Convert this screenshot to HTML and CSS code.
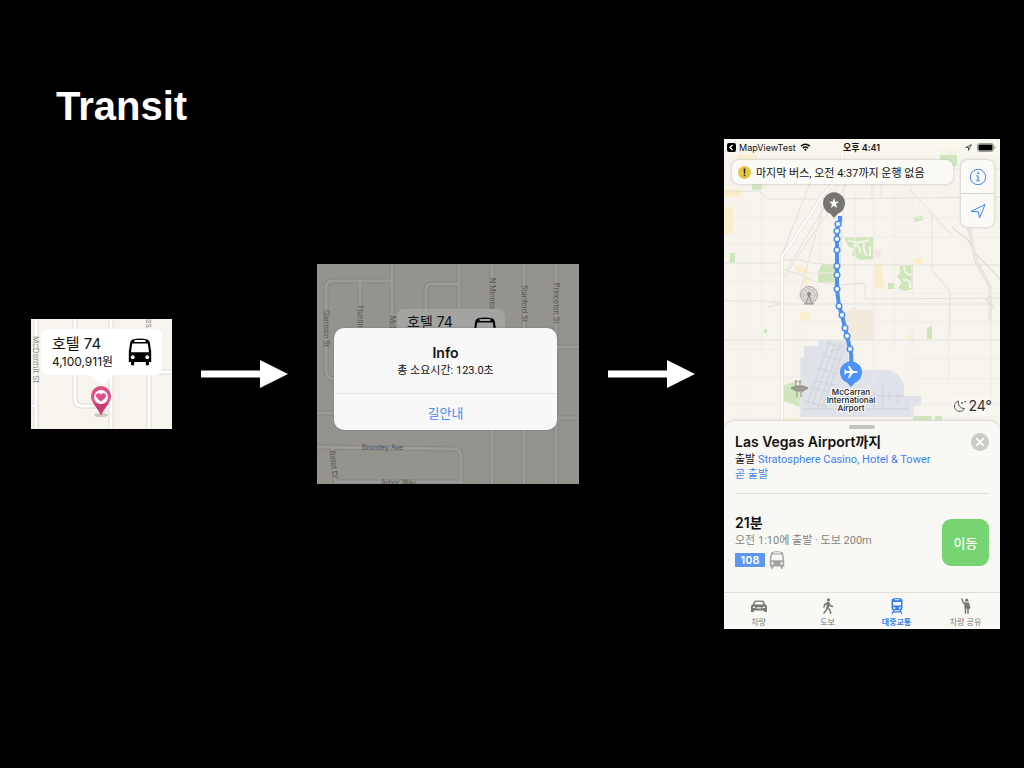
FILE: index.html
```html
<!DOCTYPE html>
<html lang="ko">
<head>
<meta charset="utf-8">
<meta name="viewport" content="width=device-width, initial-scale=1">
<title>Transit</title>
<link rel="stylesheet" href="styles.css">
</head>
<body>
<svg class="defs" aria-hidden="true">
  <symbol id="bus" viewBox="0 0 24 28">
    <path fill-rule="evenodd" d="M4.500 1.400Q12-.6 19.500 1.400 21.500 2.100 21.800 4.500L23.200 13.500V24H21V26.300Q20.800 27.600 19.500 27.600 18 27.600 17.800 26.300V24H6.200V26.300Q6 27.600 4.500 27.600 3.200 27.600 3 26.300V24H.8V13.500L2.200 4.500Q2.500 2.100 4.500 1.400zM7.300 1.900Q6.300 1.900 6.300 2.900T7.300 3.900H16.700Q17.700 3.900 17.700 2.900T16.700 1.900zM4.200 5.400 3 14.200H21L19.800 5.400zM4.700 17.300a1.900 1.900 0 1 0 .1 0zM19.200 17.300a1.900 1.900 0 1 0 .1 0z"/>
  </symbol>
</svg>

<header class="slide-header"><h1>Transit</h1></header>

<main class="flow">
  <section class="shot shot-pin" aria-label="호텔 74">
    <svg class="map" viewBox="0 0 141 110" preserveAspectRatio="xMidYMid slice" aria-hidden="true">
      <path class="road-edge" d="M5 0V110M80 0V110M118 0V110M118 53H141M0 87H5M44 0V81Q45 87 51 87H80"/>
      <path class="road-fill" d="M5 0V110M80 0V110M118 0V110M118 53H141M0 87H5M44 0V81Q45 87 51 87H80"/>
      <text class="street" transform="translate(2 17) rotate(90)">McDermit St</text>
      <text class="street" transform="translate(115 0) rotate(90)">es</text>
      <ellipse cx="70" cy="96" rx="7" ry="2" fill="#cfc9c4"/>
      <path d="M70 96C67 89 60 84 60 77a10 10 0 0 1 20 0c0 7-7 12-10 19z" fill="#dc4f88"/>
      <path d="M70 96c-2-4-5-8-7.500-11.500h15C75 88 72 92 70 96z" fill="#c93d74"/>
      <circle cx="70" cy="78" r="7" fill="#fff"/>
      <path d="M70 82.500c-2-1.800-5-3.500-5-5.800 0-2.600 3.500-3.300 5-.9 1.500-2.400 5-1.700 5 .9 0 2.300-3 4-5 5.800z" fill="#dc4f88"/>
    </svg>
    <div class="callout">
      <div class="callout-text">
        <strong>호텔 74</strong>
        <span>4,100,911원</span>
      </div>
      <svg class="callout-bus"><use href="#bus"/></svg>
    </div>
  </section>

  <svg class="arrow" viewBox="0 0 87 28" aria-hidden="true"><path d="M0 10.500H59V0L87 14 59 28V17.500H0z" fill="#fff"/></svg>

  <section class="shot shot-alert">
    <svg class="map" viewBox="0 0 262 220" preserveAspectRatio="xMidYMid slice" aria-hidden="true">
      <path class="dim-edge" d="M75 0V66M75 17H15Q9 17 9 24V107Q10 115 18 115M43 17V66M142 0V60M142 20H114Q109 20 109 26V60M175 0V220M207 0V220M239 0V220M239 83H262M0 149H20M239 154H262M0 183 138 185Q144 186 144 193V220M15 184Q16 200 19 220M19 218H146"/>
      <path class="dim-fill" d="M75 0V66M75 17H15Q9 17 9 24V107Q10 115 18 115M43 17V66M142 0V60M142 20H114Q109 20 109 26V60M175 0V220M207 0V220M239 0V220M239 83H262M0 149H20M239 154H262M0 183 138 185Q144 186 144 193V220M15 184Q16 200 19 220M19 218H146"/>
      <g class="dim-street">
        <text transform="translate(7 46) rotate(90)">Garrison St</text>
        <text transform="translate(41 42) rotate(90)">Huntington</text>
        <text transform="translate(73 52) rotate(90)">McDermit</text>
        <text transform="translate(173 14) rotate(90)">N Minnesota</text>
        <text transform="translate(205 21) rotate(90)">Stanford St</text>
        <text transform="translate(237 19) rotate(90)">Princeton St</text>
        <text x="45" y="186">Bromley Ave</text>
        <text x="64" y="221">Arbor Way</text>
        <text transform="translate(13 187) rotate(84)">Ballet Dr</text>
      </g>
    </svg>
    <div class="callout callout-dim" aria-hidden="true">
      <div class="callout-text"><strong>호텔 74</strong></div>
      <svg class="callout-bus"><use href="#bus"/></svg>
    </div>
    <div class="dialog" role="dialog" aria-labelledby="dlg-title">
      <div class="dialog-body">
        <h2 id="dlg-title">Info</h2>
        <p>총 소요시간: 123.0초</p>
      </div>
      <button type="button">길안내</button>
    </div>
  </section>

  <svg class="arrow" viewBox="0 0 87 28" aria-hidden="true"><path d="M0 10.500H59V0L87 14 59 28V17.500H0z" fill="#fff"/></svg>

  <section class="phone">
    <div class="phone-map">
      <svg class="map" viewBox="0 0 276 292" preserveAspectRatio="xMidYMin slice" aria-hidden="true">
        <rect width="276" height="292" fill="#f7f4ee"/>
        <g fill="#f9efcf">
          <path d="M0 68H9V95H0zM0 50H17V58H0zM13 9H33V20H13zM150 125H158L160 150H150zM190 119H199V125H190zM76 173H86V181H76zM70 127 83 128 86 136 72 133zM82 137 87 139 84 147 77 147zM183 196H189V201H183zM60 279H75V284H60zM35 43H42V50H35z"/>
        </g>
        <path d="M123 173 130 167 135 171 150 171V201H123z" fill="#f3eade"/>
        <path d="M150 111H157V119H150z" fill="#f8e6e4"/>
        <path d="M94 201H122L126 231H165Q176 235 180 245V257H190V278H76V219H80V207H94zM190 257H197V267H190z" fill="#dfe2e8"/>
        <g fill="#cfe6bd">
          <path d="M98 125H113V144L94 143V133zM6 114H11V124H6zM203 189 208 187V200H203zM60 246 70 243 76 248V268L60 262zM189 277H208V283H189zM211 277H218V283H211zM216 10H233V27H216zM189 78 199 77V81L191 83zM164 144H171V150H164zM28 45H38V51H28zM40 190H43V194H40z"/>
          <path d="M120 98H149V120L136 121 128 116 130 110 124 107zM176 126H189V150L180 152 174 149 178 143 173 138 176 134z"/>
        </g>
        <path d="M124 101Q132 106 145 101M129 107Q136 104 136 114M140 104Q139 112 143 117M146 107V117M180 127Q181 138 189 135M179 141Q187 139 186 149" fill="none" stroke="#f4f5e9" stroke-width="2"/>
        <g fill="none" stroke="#efece7" stroke-width="1">
          <path d="M38 40V219M20 60V292M96 50V125M131 52V168M150 34V245M172 40V122M188 20V292M225 158V245M267 160V292M76 181V292M237 20V78M170 120V210M248 40V100M0 79H276M0 105H108M38 134H110M0 143H76M76 183H276M170 154H276M0 210H60M190 220H276M0 238H76M190 240H276M0 265H60M190 265H276M110 98H276M0 197H40M170 60V98"/>
        </g>
        <g fill="none" stroke="#e4e1dc" stroke-width="1">
          <path d="M0 124H55Q60 119 76 121L88 124M88 124 110 126H276M58 130 75 135 92 143 113 146 141 144V160L276 159M0 162H42L58 165H270M0 201H276M29 24 35 52 44 60H95L276 58M95 20 58 116M140 20 60 138M112 22 74 160M128 22 62 132M122 20 116 126M188 30 276 30M185 50 228 96M208 72V130L226 153V195M0 53 35 52M56 165 44 168M50 161 60 166M148 20V58M157 22V58"/>
          <path d="M228 88 245 102 250 113 276 140" stroke="#d2d0cb"/>
          <path d="M244 86 252 122 266 148V182" stroke="#dddbd6" stroke-width="3"/>
          <path d="M244 86 252 122 266 148V182" stroke="#f8f6f2"/>
          <path d="M266 165 262 160 267 157M266 165 270 168 266 171" stroke="#dddbd6"/>
        </g>
        <path d="M58 292V120Q58 116 62 112L98 57 112 42 120 10" fill="none" stroke="#dfdcd5" stroke-width="3"/>
        <path d="M58 292V120Q58 116 62 112L98 57 112 42 120 10" fill="none" stroke="#fff" stroke-width="2"/>
        <g fill="none" stroke="#d3d7dd" stroke-width="1.500">
          <path d="M83 265 106 202M88 265 112 203M93 270 117 204M98 268 119 212M103 204 119 208M98 216 117 222M93 229 113 235M86 248 106 253M80 262 103 268M78 270H184M108 257H180M140 268V255M150 270V251M159 267V247M165 262V252M174 264V255M92 242 110 246M106 212 116 210"/>
        </g>
        <g stroke="#aaa7a1" fill="none">
          <circle cx="85" cy="156" r="8.500" fill="#deddd9"/>
          <circle cx="85" cy="156" r="6" stroke="#c5c3be"/>
          <path d="M85 149V163M78 156H92M80 151 90 161M90 151 80 161" stroke="#c5c3be"/>
          <path d="M85 156 82 165M85 156 88 165M80 165H90" stroke="#918f89"/>
          <circle cx="85" cy="155" r="2" fill="#8e8c86" stroke="none"/>
        </g>
        <g fill="#a19d96">
          <path d="M67 249 73 247H79L84 249 79 252H72z" stroke="#88847d"/>
          <path d="M71 241H73V247H71zM75 241H77V247H75zM72 253H74V258H72zM76 253H78V258H76zM70 242H78V243H70z" fill="#b9b6af"/>
        </g>
        <path d="M116 77V82L114 85 113 92V136L113 150 115 167 118 176 121 189 123 197 126 210Q128 215 127 230" fill="none" stroke="#4e8ff0" stroke-width="4" stroke-linejoin="round"/>
        <g fill="#fff" stroke="#4e8ff0" stroke-width="1.500">
          <circle cx="114" cy="85" r="2.800"/><circle cx="113" cy="92" r="2.800"/><circle cx="113" cy="100" r="2.800"/><circle cx="113" cy="111" r="2.800"/><circle cx="113" cy="127" r="2.800"/><circle cx="113" cy="136" r="2.800"/><circle cx="113" cy="150" r="2.800"/><circle cx="115" cy="167" r="2.800"/><circle cx="118" cy="176" r="2.800"/><circle cx="121" cy="189" r="2.800"/><circle cx="123" cy="197" r="2.800"/><circle cx="126" cy="210" r="2.800"/>
        </g>
        <path d="M110 79 106 74.500A11 11 0 1 1 114 74.500z" fill="#777674"/>
        <path d="M110 59 111.300 62.700H115L112 65.100 113.100 69 110 66.700 106.900 69 108 65.100 105 62.700H108.700z" fill="#fff"/>
        <path d="M127 248 123 243.500A11 11 0 1 1 131 243.500z" fill="#4e92f5"/>
        <path d="M134 233Q133 232 131 232L129 232 125.500 227H124L126 232H122.500L121 230.500H120L120.800 233 120 235.500H121L122.500 234H126L124 239H125.500L129 234H131Q133 234 134 233z" fill="#fff"/>
        <g class="place"><text x="127" y="256">McCarran</text><text x="127" y="264">International</text><text x="127" y="272">Airport</text></g>
      </svg>

      <div class="status">
        <a class="status-back" href="#">
          <svg viewBox="0 0 9 9" width="9" height="9" aria-hidden="true"><rect width="9" height="9" rx="2"/><path d="M5.500 2 3 4.500 5.500 7" stroke="#fff" stroke-width="1.400" fill="none"/></svg>
          MapViewTest
          <svg class="wifi" viewBox="0 0 12 9" width="11" height="8" aria-hidden="true"><path d="M1 3.500Q6-.8 11 3.500M3 5.700Q6 3.200 9 5.700" fill="none" stroke="#111" stroke-width="1.700"/><path d="M4.500 7.200Q6 6 7.500 7.200L6 9z"/></svg>
        </a>
        <time>오후 4:41</time>
        <span class="status-right">
          <svg viewBox="0 0 8 8" width="7" height="7" aria-hidden="true"><path d="M.8 4 7.300.7 4 7.300V4z" fill="none" stroke="#333" stroke-width=".9"/></svg>
          <svg viewBox="0 0 19 9" width="19" height="9" aria-hidden="true"><rect x=".5" y=".5" width="16" height="8" rx="2" fill="none" stroke="#999"/><rect x="1.500" y="1.500" width="14" height="6" rx="1"/><path d="M17.500 3v3q1-.3 1-1.500t-1-1.500z" fill="#888"/></svg>
        </span>
      </div>

      <div class="map-top">
        <div class="notice">
          <svg viewBox="0 0 13 13" width="13" height="13" aria-hidden="true"><circle cx="6.500" cy="6.500" r="6.500" fill="#e6c446"/><path d="M5.600 2.500H7.400L7.100 7.700H5.900zM5.700 8.700H7.300V10.300H5.700z" fill="#222"/></svg>
          <span>마지막 버스, 오전 4:37까지 운행 없음</span>
        </div>
        <div class="controls">
          <button type="button" aria-label="정보"><svg viewBox="0 0 18 18" width="18" height="18"><circle cx="9" cy="9" r="7.700" fill="none" stroke="#3b84f2"/><path d="M8.300 4.300H9.900V5.900H8.300zM7 7.500H9.700V12.500H11V13.300H7V12.500H8.500V8.300H7z" fill="#3b84f2"/></svg></button>
          <button type="button" aria-label="현재 위치"><svg viewBox="0 0 18 18" width="18" height="18"><path d="M2 9.500 16 2.500 10.500 16 9.300 9.700z" fill="none" stroke="#3b84f2" stroke-linejoin="round"/></svg></button>
        </div>
      </div>

      <div class="weather">
        <svg viewBox="0 0 14 14" width="14" height="14" aria-hidden="true"><path d="M5.500 2A5.300 5.300 0 1 0 11.500 9.500 5.800 5.800 0 0 1 5.500 2z" fill="none" stroke="#444" stroke-width=".9"/><path d="M8 4h2M9 3v2M11.500 2.600h1.500M12.200 2v1.500" stroke="#444" stroke-width=".8"/></svg>
        <span>24°</span>
      </div>
    </div>

    <div class="sheet">
      <div class="handle"></div>
      <div class="sheet-head">
        <div>
          <h2>Las Vegas Airport까지</h2>
          <p>출발 <a href="#">Stratosphere Casino, Hotel &amp; Tower</a></p>
          <p><a href="#">곧 출발</a></p>
        </div>
        <button class="close" type="button" aria-label="닫기"><svg viewBox="0 0 18 18" width="18" height="18"><circle cx="9" cy="9" r="9" fill="#cbcac7"/><path d="M5.700 5.700 12.300 12.300M12.300 5.700 5.700 12.300" stroke="#fff" stroke-width="1.700" stroke-linecap="round"/></svg></button>
      </div>
      <div class="trip">
        <div>
          <h3>21분</h3>
          <p>오전 1:10에 출발 · 도보 200m</p>
          <div class="line"><span class="badge">108</span><svg class="line-bus"><use href="#bus"/></svg></div>
        </div>
        <button class="go" type="button">이동</button>
      </div>
      <nav class="tabs">
        <button type="button"><svg viewBox="0 0 18 16" width="18" height="16"><path fill-rule="evenodd" d="M4.500 2.800Q9 2 13.500 2.800L15.200 6.300Q17 7.300 17 8.800V14H14.200V12.500H3.800V14H1V8.800Q1 7.300 2.800 6.300zM5.400 4 4.400 6.400H13.600L12.600 4Q9 3.500 5.400 4zM3 8.400V10L6 10.200Q5.500 8.700 3 8.400zM15 8.400V10L12 10.200Q12.500 8.700 15 8.400zM6.800 9.300H11.200V10.500H6.800z"/></svg>차량</button>
        <button type="button"><svg viewBox="0 0 18 16" width="18" height="16"><circle cx="9.500" cy="1.900" r="1.600"/><path d="M9 5 8.300 9.500 10.800 12 11.700 15.200M8.300 9.500 7.300 12.300 5 15M8.500 5 5.700 6.500 5 9M9.500 5 11 7.500 13.500 8.500" fill="none" stroke="currentColor" stroke-width="1.500" stroke-linecap="round" stroke-linejoin="round"/><path d="M7.800 4H10.300L10 9.800 7.500 10z"/></svg>도보</button>
        <button type="button" class="active" aria-current="page"><svg viewBox="0 0 18 16" width="18" height="16"><path fill-rule="evenodd" d="M5 .6Q9-.4 13 .6 14.500 1.100 14.500 2.600V10Q14.500 12 12.800 12.200L14.600 15.700H13.200L12.600 14.500H5.400L4.800 15.700H3.400L5.200 12.200Q3.500 12 3.500 10V2.600Q3.500 1.100 5 .6zM6.800 1.300V2.300H11.200V1.300zM5 4V7.500H13V4zM6.200 9A1 1 0 1 0 6.300 9zM11.700 9A1 1 0 1 0 11.800 9zM6.500 12.300 6 13.300H12L11.500 12.300z"/></svg>대중교통</button>
        <button type="button"><svg viewBox="0 0 18 16" width="18" height="16"><circle cx="9.800" cy="2.200" r="1.600"/><path d="M4.800 1 6.500 5 8 5.700M11.500 5.500 12.700 10M8.500 9V15.200M11 9V15.200" fill="none" stroke="currentColor" stroke-width="1.500" stroke-linecap="round"/><path d="M7 4.400H12L11.800 10.500H7.700z"/></svg>차량 공유</button>
      </nav>
    </div>
  </section>
</main>
</body>
</html>
```
FILE: styles.css
```css
* { box-sizing: border-box; }
body {
  margin: 0;
  min-height: 100vh;
  background: #000;
  color: #111;
  font-family: Inter, "Noto Sans CJK KR", sans-serif;
}
h1, h2, h3, p { margin: 0; }
a { color: #3a82f0; text-decoration: none; }
button { border: 0; padding: 0; background: none; font: inherit; color: inherit; }
svg { display: block; flex-shrink: 0; }
.defs { position: absolute; width: 0; height: 0; }

.slide-header { padding: 82px 56px 9px; }
.slide-header h1 {
  color: #fff;
  font: bold 40px/48px "Liberation Sans", sans-serif;
}

.flow {
  display: flex;
  align-items: center;
  justify-content: center;
  gap: 29px;
  padding: 0 24px 0 31px;
}
.shot { position: relative; overflow: hidden; margin-bottom: 20px; }
.shot-pin { flex: 0 1 141px; min-height: 110px; padding: 10px; background: #f7f3ed; }
.shot-alert { flex: 0 1 262px; min-height: 220px; padding: 64px 22px 53px 17px; background: #94938d; }
.arrow { flex: 0 1 87px; height: 28px; margin-bottom: 20px; }
.map { position: absolute; inset: 0; width: 100%; height: 100%; }

.road-edge, .road-fill { fill: none; }
.road-edge { stroke: #dedbd7; stroke-width: 5px; }
.road-fill { stroke: #fff; stroke-width: 3px; }
.street { font-size: 8px; fill: #8d8b88; }
.dim-edge, .dim-fill { fill: none; }
.dim-edge { stroke: #868683; stroke-width: 5px; }
.dim-fill { stroke: #9b9b99; stroke-width: 3px; }
.dim-street { font-size: 7px; fill: #51514f; }

.callout {
  position: relative;
  display: flex;
  align-items: center;
  justify-content: space-between;
  height: 46px;
  padding: 0 10px 0 11px;
  border-radius: 7px;
  background: #fff;
}
.callout::after {
  content: "";
  position: absolute;
  top: 100%;
  left: 50%;
  margin-left: -12px;
  border: 12px solid transparent;
  border-top: 10px solid #fff;
  border-bottom: 0;
}
.callout-text { display: flex; flex-direction: column; white-space: nowrap; }
.callout-text strong { font-size: 15px; line-height: 20px; font-weight: 400; }
.callout-text span { font-size: 12px; line-height: 16px; }
.callout-bus { width: 24px; height: 28px; }
.callout-dim {
  position: absolute;
  top: 45px;
  left: 80px;
  width: 108px;
  align-items: flex-start;
  padding: 3px 8px 0 10px;
  background: #a3a3a1;
}
.callout-dim .callout-text strong { font-size: 14px; }
.callout-dim .callout-bus { margin-top: 5px; }

.dialog {
  position: relative;
  border-radius: 10px;
  background: #f8f8f8;
  box-shadow: 0 0 2px #777;
  text-align: center;
}
.dialog-body { height: 66px; padding-top: 15px; border-bottom: 1px solid #e7e7e7; }
.dialog h2 { font-size: 14px; line-height: 20px; font-weight: 600; }
.dialog p { font-size: 11px; line-height: 16px; }
.dialog p, .sheet p { font-family: Roboto, "Noto Sans CJK KR", sans-serif; }
.dialog button { width: 100%; height: 36px; color: #3f8bf7; font-size: 13px; }

.phone { flex: 0 1 276px; overflow: hidden; background: #f9f8f4; }
.phone-map { position: relative; height: 292px; margin-bottom: -10px; }
.place {
  font-size: 8px;
  font-weight: 600;
  text-anchor: middle;
  fill: #333;
  stroke: #fff;
  stroke-width: 2px;
  paint-order: stroke;
}
.status {
  position: relative;
  display: grid;
  grid-template-columns: 1fr auto 1fr;
  align-items: center;
  height: 16px;
  padding: 0 4px 0 3px;
  background: rgba(249, 247, 237, .85);
  font-size: 9px;
}
.status-back { display: flex; align-items: center; gap: 3px; color: #111; }
.wifi { margin-left: 1px; }
.status time { font-weight: 600; }
.status-right { display: flex; align-items: center; justify-content: flex-end; gap: 5px; }
.map-top {
  position: relative;
  display: flex;
  align-items: flex-start;
  gap: 8px;
  padding: 5px 6px 0 8px;
}
.notice, .controls { background: #fbfaf6; border-radius: 7px; box-shadow: 0 0 3px #bbb9b3; }
.notice {
  display: flex;
  flex: 1;
  align-items: center;
  gap: 5px;
  height: 24px;
  padding-left: 6px;
  font-family: Roboto, "Noto Sans CJK KR", sans-serif;
  font-size: 11px;
  white-space: nowrap;
}
.controls { width: 33px; }
.controls button { display: grid; place-items: center; width: 100%; height: 33px; }
.controls button + button { height: 34px; border-top: 1px solid #d9d8d5; }
.weather {
  position: absolute;
  right: 8px;
  bottom: 15px;
  display: flex;
  align-items: center;
  gap: 2px;
  padding-left: 2px;
  border-radius: 4px;
  background: rgba(249, 247, 242, .8);
  color: #333;
  font-size: 14px;
  line-height: 20px;
}

.sheet {
  position: relative;
  padding-top: 4px;
  border-radius: 10px 10px 0 0;
  background: #f9f8f4;
  box-shadow: 0 -1px 2px #d8d6d0;
}
.handle { width: 26px; height: 4px; margin: 0 auto; border-radius: 2px; background: #c4c3c0; }
.sheet-head {
  display: flex;
  justify-content: space-between;
  margin: 0 11px;
  padding-top: 3px;
  height: 65px;
  border-bottom: 1px solid #dfdedb;
}
.sheet h2, .sheet h3 { font-size: 14px; line-height: 20px; font-weight: 600; }
.sheet p { font-size: 11px; line-height: 15px; white-space: nowrap; }
.sheet-head a { font-family: Roboto, "Noto Sans CJK KR", sans-serif; }
.sheet-head p a:lang(ko) { font-size: 11px; }
.close { align-self: flex-start; margin-top: 1px; }
.trip {
  display: flex;
  align-items: flex-start;
  justify-content: space-between;
  height: 98px;
  padding: 19px 11px 0;
}
.trip p { color: #858481; }
.line { display: flex; align-items: center; gap: 4px; margin-top: 3px; }
.badge {
  width: 30px;
  background: #5c96ef;
  color: #fff;
  border-radius: 1px;
  font-size: 11px;
  line-height: 14px;
  font-weight: 600;
  text-align: center;
}
.line-bus { width: 16px; height: 18px; fill: #a3a2a0; }
.go {
  width: 47px;
  height: 47px;
  margin-top: 6px;
  border-radius: 9px;
  background: #76d572;
  color: #fff;
  font-size: 13px;
  font-weight: 500;
}
.tabs { display: grid; grid-template-columns: repeat(4, 1fr); border-top: 1px solid #deddda; }
.tabs button {
  display: flex;
  flex-direction: column;
  align-items: center;
  gap: 2px;
  height: 36px;
  padding-top: 5px;
  color: #777673;
  font-size: 8px;
  line-height: 12px;
}
.tabs svg { fill: currentColor; }
.tabs .active { color: #2f7ef2; font-weight: 600; }
```
